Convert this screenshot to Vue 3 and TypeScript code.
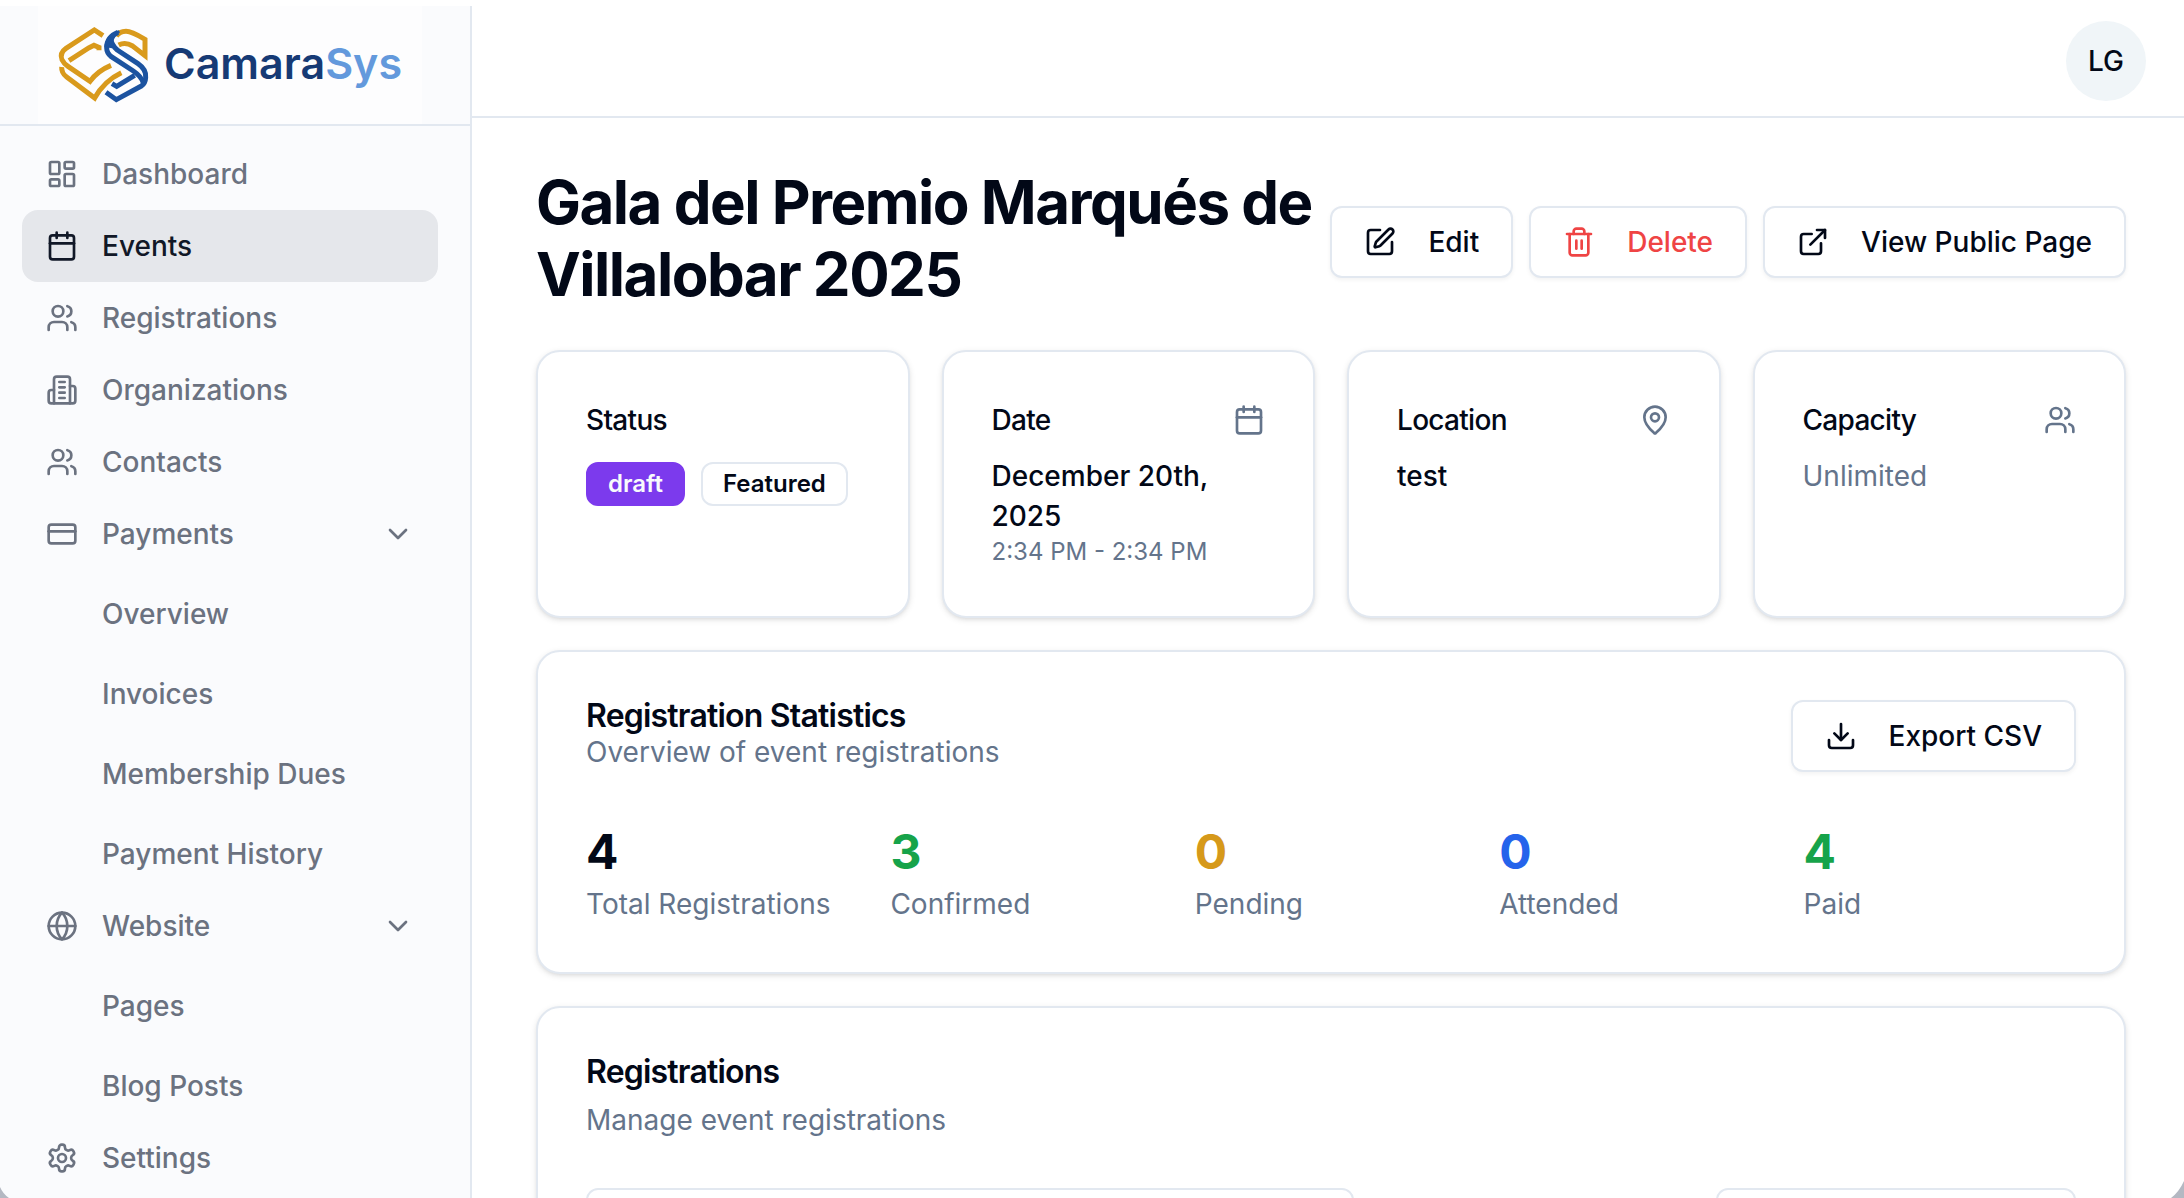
<script setup lang="ts">
import { computed, h, ref, type FunctionalComponent } from 'vue'

type Shape = { tag: 'path' | 'rect' | 'circle'; attrs: Record<string, string | number> }
type NavItem = { label: string; icon: string; children?: string[] }

const p = (d: string): Shape => ({ tag: 'path', attrs: { d } })
const r = (x: number, y: number, width: number, height: number, rx: number): Shape => ({
  tag: 'rect',
  attrs: { x, y, width, height, rx },
})
const c = (cx: number, cy: number, radius: number): Shape => ({ tag: 'circle', attrs: { cx, cy, r: radius } })

const icons: Record<string, Shape[]> = {
  dashboard: [r(3, 3, 7, 9, 1), r(14, 3, 7, 5, 1), r(14, 12, 7, 9, 1), r(3, 16, 7, 5, 1)],
  calendar: [p('M8 2v4'), p('M16 2v4'), r(3, 4, 18, 18, 2), p('M3 10h18')],
  users: [
    p('M16 21v-2a4 4 0 0 0-4-4H6a4 4 0 0 0-4 4v2'),
    c(9, 7, 4),
    p('M22 21v-2a4 4 0 0 0-3-3.87'),
    p('M16 3.13a4 4 0 0 1 0 7.75'),
  ],
  building: [
    p('M6 22V4a2 2 0 0 1 2-2h8a2 2 0 0 1 2 2v18Z'),
    p('M6 12H4a2 2 0 0 0-2 2v6a2 2 0 0 0 2 2h2'),
    p('M18 9h2a2 2 0 0 1 2 2v9a2 2 0 0 1-2 2h-2'),
    p('M10 6h4'),
    p('M10 10h4'),
    p('M10 14h4'),
    p('M10 18h4'),
  ],
  card: [r(2, 5, 20, 14, 2), p('M2 10h20')],
  globe: [c(12, 12, 10), p('M12 2a14.5 14.5 0 0 0 0 20 14.5 14.5 0 0 0 0-20'), p('M2 12h20')],
  settings: [
    p(
      'M12.22 2h-.44a2 2 0 0 0-2 2v.18a2 2 0 0 1-1 1.73l-.43.25a2 2 0 0 1-2 0l-.15-.08a2 2 0 0 0-2.73.73l-.22.38a2 2 0 0 0 .73 2.73l.15.1a2 2 0 0 1 1 1.72v.51a2 2 0 0 1-1 1.74l-.15.09a2 2 0 0 0-.73 2.73l.22.38a2 2 0 0 0 2.73.73l.15-.08a2 2 0 0 1 2 0l.43.25a2 2 0 0 1 1 1.73V20a2 2 0 0 0 2 2h.44a2 2 0 0 0 2-2v-.18a2 2 0 0 1 1-1.73l.43-.25a2 2 0 0 1 2 0l.15.08a2 2 0 0 0 2.73-.73l.22-.39a2 2 0 0 0-.73-2.73l-.15-.08a2 2 0 0 1-1-1.74v-.5a2 2 0 0 1 1-1.74l.15-.09a2 2 0 0 0 .73-2.73l-.22-.38a2 2 0 0 0-2.73-.73l-.15.08a2 2 0 0 1-2 0l-.43-.25a2 2 0 0 1-1-1.73V4a2 2 0 0 0-2-2z',
    ),
    c(12, 12, 3),
  ],
  chevron: [p('m6 9 6 6 6-6')],
  edit: [
    p('M12 3H5a2 2 0 0 0-2 2v14a2 2 0 0 0 2 2h14a2 2 0 0 0 2-2v-7'),
    p('M18.375 2.625a1 1 0 0 1 3 3l-9.013 9.014a2 2 0 0 1-.853.505l-2.873.84a.5.5 0 0 1-.62-.62l.84-2.873a2 2 0 0 1 .506-.852z'),
  ],
  trash: [
    p('M3 6h18'),
    p('M19 6v14c0 1-1 2-2 2H7c-1 0-2-1-2-2V6'),
    p('M8 6V4c0-1 1-2 2-2h4c1 0 2 1 2 2v2'),
    p('M10 11v6'),
    p('M14 11v6'),
  ],
  external: [p('M15 3h6v6'), p('M10 14 21 3'), p('M18 13v6a2 2 0 0 1-2 2H5a2 2 0 0 1-2-2V8a2 2 0 0 1 2-2h6')],
  download: [p('M21 15v4a2 2 0 0 1-2 2H5a2 2 0 0 1-2-2v-4'), p('m7 10 5 5 5-5'), p('M12 15V3')],
  pin: [
    p('M20 10c0 4.993-5.539 10.193-7.399 11.799a1 1 0 0 1-1.202 0C9.539 20.193 4 14.993 4 10a8 8 0 0 1 16 0'),
    c(12, 10, 3),
  ],
}

// Outline icon on a 24-unit grid, shared by the whole page.
const Icon: FunctionalComponent<{ name: string }> = (props) =>
  h(
    'svg',
    {
      width: 32,
      height: 32,
      viewBox: '0 0 24 24',
      fill: 'none',
      stroke: 'currentColor',
      'stroke-width': 2,
      'stroke-linecap': 'round',
      'stroke-linejoin': 'round',
      'aria-hidden': 'true',
    },
    icons[props.name].map((s) => h(s.tag, s.attrs)),
  )
Icon.props = ['name']

const nav: NavItem[] = [
  { label: 'Dashboard', icon: 'dashboard' },
  { label: 'Events', icon: 'calendar' },
  { label: 'Registrations', icon: 'users' },
  { label: 'Organizations', icon: 'building' },
  { label: 'Contacts', icon: 'users' },
  { label: 'Payments', icon: 'card', children: ['Overview', 'Invoices', 'Membership Dues', 'Payment History'] },
  { label: 'Website', icon: 'globe', children: ['Pages', 'Blog Posts'] },
  { label: 'Settings', icon: 'settings' },
]
const active = ref('Events')
const open = ref<Record<string, boolean>>({ Payments: true, Website: true })
const toggle = (label: string) => {
  open.value[label] = !open.value[label]
}

const counts = ref({ total: 4, confirmed: 3, pending: 0, attended: 0, paid: 4 })
const stats = computed(() => [
  { label: 'Total Registrations', value: counts.value.total, tone: 'ink' },
  { label: 'Confirmed', value: counts.value.confirmed, tone: 'green' },
  { label: 'Pending', value: counts.value.pending, tone: 'amber' },
  { label: 'Attended', value: counts.value.attended, tone: 'blue' },
  { label: 'Paid', value: counts.value.paid, tone: 'green' },
])
const search = ref('')
const filter = ref('')
</script>

<template>
  <div class="app">
    <aside class="sidebar">
      <div class="brand">
        <a class="logo" href="#">
          <svg class="mark" viewBox="0 0 312 264" fill="none" stroke-width="15" aria-hidden="true">
            <g stroke="#d99a1c">
              <path d="M147 44 121 27 36 82Q16 96 24 116 29 127 42 136L108 181Q130 150 171 133" />
              <path d="M45 119 104 81 120 73 135 79V88" />
              <path d="M23 138Q22 156 38 168L122 231Q150 180 202 155" />
              <path d="M187 46Q196 31 216 31 232 31 273 55V104L236 75Q214 62 194 72" />
            </g>
            <g stroke="#1c53a0">
              <path d="M194 28Q154 42 151 78L174 82Q174 52 198 34Z" fill="#1c53a0" stroke="none" />
              <path d="M192 34Q158 48 158 80 158 96 172 107L238 150Q262 166 268 186" />
              <path d="M170 50Q172 72 190 87L252 128Q278 146 275 170 274 188 262 195L187 236 156 214" />
              <path d="M174 188 188 196 242 163" />
            </g>
          </svg>
          <span class="wordmark">Camara<span class="light">Sys</span></span>
        </a>
      </div>
      <nav class="nav" aria-label="Main">
        <template v-for="item in nav" :key="item.label">
          <template v-if="item.children">
            <button class="nav-row" type="button" :aria-expanded="open[item.label]" @click="toggle(item.label)">
              <Icon :name="item.icon" />
              <span class="grow">{{ item.label }}</span>
              <Icon name="chevron" />
            </button>
            <div v-if="open[item.label]" class="subnav">
              <a v-for="child in item.children" :key="child" class="nav-row child" href="#">{{ child }}</a>
            </div>
          </template>
          <a v-else class="nav-row" :class="{ active: active === item.label }" href="#" @click.prevent="active = item.label">
            <Icon :name="item.icon" />
            <span>{{ item.label }}</span>
          </a>
        </template>
      </nav>
    </aside>

    <div class="page">
      <header class="topbar">
        <button class="avatar" type="button">LG</button>
      </header>

      <main class="content">
        <div class="heading">
          <h1>Gala del Premio Marqués de Villalobar 2025</h1>
          <div class="actions">
            <button class="btn" type="button"><Icon name="edit" />Edit</button>
            <button class="btn danger" type="button"><Icon name="trash" />Delete</button>
            <a class="btn" href="#"><Icon name="external" />View Public Page</a>
          </div>
        </div>

        <div class="cards">
          <section class="card">
            <div class="card-head"><h3>Status</h3></div>
            <div class="badges">
              <span class="badge solid">draft</span>
              <span class="badge">Featured</span>
            </div>
          </section>
          <section class="card">
            <div class="card-head"><h3>Date</h3><Icon name="calendar" /></div>
            <p class="value">December 20th, 2025</p>
            <p class="time">2:34 PM - 2:34 PM</p>
          </section>
          <section class="card">
            <div class="card-head"><h3>Location</h3><Icon name="pin" /></div>
            <p class="value">test</p>
          </section>
          <section class="card">
            <div class="card-head"><h3>Capacity</h3><Icon name="users" /></div>
            <p class="muted">Unlimited</p>
          </section>
        </div>

        <section class="card">
          <div class="stats-head">
            <div>
              <h2>Registration Statistics</h2>
              <p class="muted">Overview of event registrations</p>
            </div>
            <button class="btn" type="button"><Icon name="download" />Export CSV</button>
          </div>
          <div class="stats">
            <div v-for="s in stats" :key="s.label">
              <div class="number" :class="s.tone">{{ s.value }}</div>
              <div class="muted">{{ s.label }}</div>
            </div>
          </div>
        </section>

        <section class="card">
          <div class="list-head">
            <h2>Registrations</h2>
            <p class="muted">Manage event registrations</p>
          </div>
          <div class="filters">
            <input v-model="search" class="field search" type="search" aria-label="Search" />
            <select v-model="filter" class="field status" aria-label="Status"></select>
          </div>
        </section>
      </main>
    </div>

    <svg class="corner left" viewBox="0 0 10 12" aria-hidden="true"><path d="M0 1Q3 8 9 12H0Z" /></svg>
    <svg class="corner right" viewBox="0 0 14 18" aria-hidden="true"><path d="M14 1Q9 12 1 18H14Z" /></svg>
  </div>
</template>

<style>
body {
  margin: 0;
  background: #fff;
}
</style>

<style scoped>
.app,
.app * {
  box-sizing: border-box;
}
.app {
  position: relative;
  display: flex;
  height: 100vh;
  padding-top: 6px;
  overflow: hidden;
  background: #fff;
  color: #020817;
  font-family: Inter, 'Liberation Sans', sans-serif;
  font-size: 28px;
  line-height: 40px;
}
h1,
h2,
h3,
p {
  margin: 0;
}
button,
input,
select {
  font: inherit;
  color: inherit;
}
a {
  color: inherit;
  text-decoration: none;
}
svg {
  flex: none;
}

.sidebar {
  flex: none;
  width: 472px;
  border-right: 2px solid #e2e8f0;
  background: #fafbfd;
}
.brand {
  display: flex;
  height: 120px;
  padding-left: 38px;
  border-bottom: 2px solid #e2e8f0;
}
.logo {
  display: flex;
  align-items: center;
  gap: 6px;
  width: 384px;
  padding-left: 16px;
  background: #fdfdfe;
}
.mark {
  width: 104px;
  height: 88px;
}
.wordmark {
  padding-bottom: 4px;
  color: #163a75;
  font-size: 43px;
  font-weight: 600;
  line-height: 56px;
}
.light {
  color: #6399dc;
}
.nav {
  padding: 12px 32px 0 22px;
}
.nav-row {
  display: flex;
  align-items: center;
  gap: 24px;
  width: 100%;
  height: 72px;
  padding: 0 24px;
  border: 0;
  border-radius: 16px;
  background: none;
  color: #6b7280;
  font-weight: 500;
  text-align: left;
}
.nav-row.active {
  background: #e5e7eb;
  color: #111827;
}
.nav-row.child {
  padding-left: 80px;
}
.grow {
  flex: 1;
}
.subnav {
  display: flex;
  flex-direction: column;
  gap: 8px;
  padding-top: 8px;
}

.page {
  flex: 1;
  min-width: 0;
}
.topbar {
  display: flex;
  align-items: center;
  justify-content: flex-end;
  height: 112px;
  padding-right: 38px;
  border-bottom: 2px solid #e2e8f0;
}
.avatar {
  width: 80px;
  height: 80px;
  padding: 0;
  border: 0;
  border-radius: 50%;
  background: #f0f5f8;
  font-weight: 500;
}
.content {
  display: flex;
  flex-direction: column;
  gap: 32px;
  padding: 48px 58px 48px 64px;
}
.heading {
  display: flex;
  align-items: center;
  justify-content: space-between;
}
h1 {
  padding-bottom: 8px;
  font-size: 60px;
  font-weight: 700;
  line-height: 72px;
  letter-spacing: -0.025em;
}
.actions {
  display: flex;
  flex: none;
  gap: 16px;
}
.btn {
  display: inline-flex;
  align-items: center;
  gap: 32px;
  height: 72px;
  padding: 0 32px;
  border: 2px solid #e2e8f0;
  border-radius: 12px;
  background: #fff;
  box-shadow: 0 2px 4px rgba(0, 0, 0, 0.05);
  font-weight: 500;
  white-space: nowrap;
}
.danger {
  color: #ef4444;
}

.cards {
  display: grid;
  grid-template-columns: repeat(4, 1fr);
  gap: 32px;
}
.card {
  padding: 48px;
  border: 2px solid #e2e8f0;
  border-radius: 24px;
  background: #fff;
  box-shadow:
    0 2px 6px rgba(0, 0, 0, 0.1),
    0 2px 4px -2px rgba(0, 0, 0, 0.1);
}
.card-head {
  display: flex;
  align-items: center;
  justify-content: space-between;
  padding-bottom: 16px;
  color: #64748b;
}
h3 {
  color: #020817;
  font-size: 28px;
  font-weight: 500;
  letter-spacing: -0.025em;
}
.badges {
  display: flex;
  gap: 16px;
  padding-top: 6px;
}
.badge {
  padding: 4px 20px;
  border: 2px solid #e2e8f0;
  border-radius: 12px;
  font-size: 24px;
  font-weight: 600;
  line-height: 32px;
}
.badge.solid {
  border-color: #7c3aed;
  background: #7c3aed;
  color: #f8fafc;
}
.value {
  font-weight: 500;
}
.time {
  color: #64748b;
  font-size: 24px;
  line-height: 32px;
}
.muted {
  color: #64748b;
}

h2 {
  font-size: 32px;
  font-weight: 600;
  line-height: 32px;
  letter-spacing: -0.025em;
}
.stats-head {
  display: flex;
  align-items: center;
  justify-content: space-between;
  padding-bottom: 48px;
}
.stats {
  display: grid;
  grid-template-columns: repeat(5, 1fr);
  gap: 32px;
}
.number {
  font-size: 48px;
  font-weight: 700;
  line-height: 64px;
}
.green {
  color: #16a34a;
}
.amber {
  color: #d6991a;
}
.blue {
  color: #2563eb;
}
.list-head {
  display: flex;
  flex-direction: column;
  gap: 12px;
  padding-bottom: 48px;
}
.filters {
  display: flex;
  justify-content: space-between;
}
.field {
  height: 72px;
  padding: 0 24px;
  border: 2px solid #e2e8f0;
  border-radius: 12px;
  background: #fff;
  appearance: none;
}
.search {
  width: 768px;
}
.status {
  width: 360px;
}

.corner {
  position: absolute;
  bottom: 0;
  fill: #b4b8c2;
}
.corner.left {
  left: 0;
  width: 10px;
}
.corner.right {
  right: 0;
  width: 14px;
}
</style>
